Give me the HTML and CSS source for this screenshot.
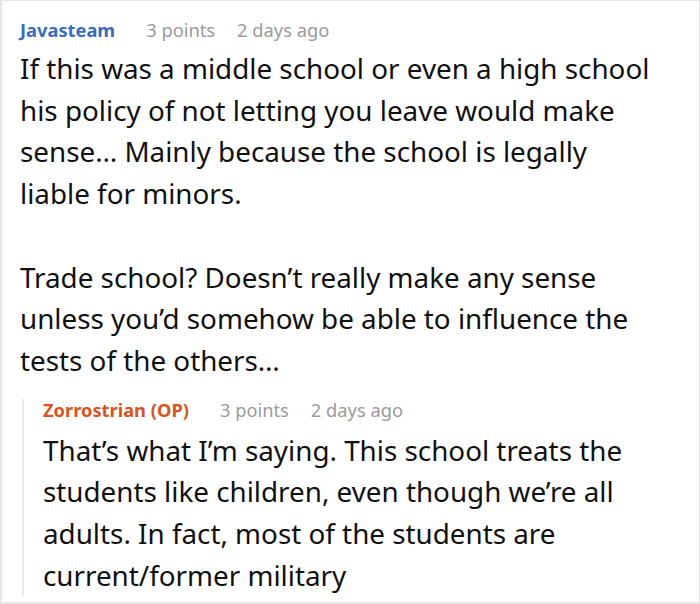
FILE: index.html
```html
<!DOCTYPE html>
<html>
<head>
<meta charset="utf-8">
<link rel="stylesheet" href="styles.css">
</head>
<body>
<div class="card">
  <div class="comment">
    <div class="meta">
      <span class="author author-blue">Javasteam</span>
      <span class="info">3 points</span>
      <span class="info">2 days ago</span>
    </div>
    <div class="body">
      <p>If this was a middle school or even a high school his policy of not letting you leave would make sense… Mainly because the school is legally liable for minors.</p>
      <p>Trade school? Doesn’t really make any sense unless you’d somehow be able to influence the tests of the others…</p>
    </div>
    <div class="reply">
      <div class="meta">
        <span class="author author-orange">Zorrostrian (OP)</span>
        <span class="info">3 points</span>
        <span class="info">2 days ago</span>
      </div>
      <div class="body">
        <p>That’s what I’m saying. This school treats the students like children, even though we’re all adults. In fact, most of the students are current/former military</p>
      </div>
    </div>
  </div>
</div>
</body>
</html>
```
FILE: styles.css
```css
html, body {
  margin: 0;
  padding: 0;
  background: #fff;
}
.card {
  box-sizing: border-box;
  width: 700px;
  height: 604px;
  border-top: 1px solid #e6e6e6;
  border-right: 1px solid #e6e6e6;
  border-left: 2px solid #e6e6e6;
  border-bottom: 2px solid #e6e6e6;
  overflow: hidden;
  font-family: "Noto Sans", "Open Sans", sans-serif;
  color: #111;
}
.comment {
  padding: 18px 44px 0 18px;
}
.meta {
  display: flex;
  gap: 22px;
  font-size: 18.3px;
  line-height: 22px;
}
.author {
  font-weight: 700;
  margin-right: 9px;
}
.author-blue { color: #3a6bbd; }
.author-orange { color: #d9531e; }
.info { color: #9a9a9a; }
.body {
  font-size: 27.8px;
  line-height: 41.7px;
  margin-top: 7px;
}
.body p {
  margin: 0 0 41.7px;
}
.body p:last-child {
  margin-bottom: 0;
}
.reply {
  margin-top: 28px;
  margin-left: 2px;
  padding-left: 19px;
  border-left: 2px solid #e8e8e8;
}
.reply .meta {
  margin-top: -11px;
}
.reply .body {
  margin-top: 9px;
  margin-bottom: -9px;
}
```
